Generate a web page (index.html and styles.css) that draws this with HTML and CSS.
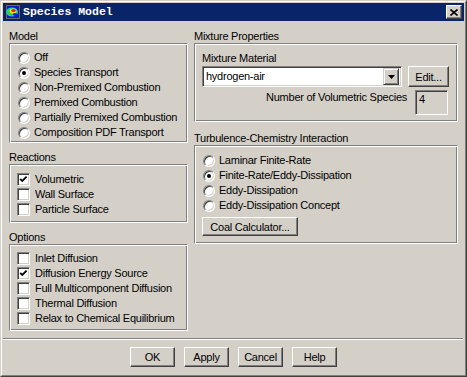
FILE: index.html
```html
<!DOCTYPE html>
<html>
<head>
<meta charset="utf-8">
<link rel="stylesheet" href="styles.css">
</head>
<body>
<div class="window">
  <div class="frame">
    <div class="titlebar">
      <svg class="app-icon" width="16" height="16" viewBox="0 0 16 16">
        <rect x="0" y="0" width="16" height="16" fill="#202020"/>
        <rect x="1" y="1" width="14" height="14" fill="#6a6a6a"/>
        <rect x="2" y="2" width="12" height="12" fill="#0a1cc8"/>
        <ellipse cx="7" cy="8" rx="6" ry="4.5" fill="#10c8e0"/>
        <ellipse cx="7" cy="8" rx="5" ry="3.5" fill="#30d040"/>
        <ellipse cx="8" cy="7" rx="3.5" ry="2.5" fill="#f0e020"/>
        <ellipse cx="8.5" cy="6.5" rx="2.2" ry="1.6" fill="#e82010"/>
        <ellipse cx="10" cy="10.5" rx="2" ry="1.2" fill="#0a1cc8"/>
      </svg>
      <span class="title">Species Model</span>
      <div class="close">
        <svg width="8" height="7" viewBox="0 0 8 7"><path d="M0.5 0.5 L7.5 6.5 M7.5 0.5 L0.5 6.5" stroke="#000" stroke-width="1.6" fill="none"/></svg>
      </div>
    </div>
    <div class="content">
      <div class="columns">
        <div class="col col-left">
          <div class="group">
            <div class="glabel">Model</div>
            <div class="gbox box-model">
              <div class="opt"><span class="radio"></span>Off</div>
              <div class="opt"><span class="radio on"></span>Species Transport</div>
              <div class="opt"><span class="radio"></span>Non-Premixed Combustion</div>
              <div class="opt"><span class="radio"></span>Premixed Combustion</div>
              <div class="opt"><span class="radio"></span>Partially Premixed Combustion</div>
              <div class="opt"><span class="radio"></span>Composition PDF Transport</div>
            </div>
          </div>
          <div class="group group-next">
            <div class="glabel">Reactions</div>
            <div class="gbox box-reactions">
              <div class="opt chk"><span class="check on"><svg width="9" height="9" viewBox="0 0 9 9"><path d="M1.2 3.8 L3.3 6 L7.6 1.6" stroke="#000" stroke-width="1.8" fill="none"/></svg></span>Volumetric</div>
              <div class="opt chk"><span class="check"></span>Wall Surface</div>
              <div class="opt chk"><span class="check"></span>Particle Surface</div>
            </div>
          </div>
          <div class="group group-next">
            <div class="glabel">Options</div>
            <div class="gbox box-options">
              <div class="opt chk"><span class="check"></span>Inlet Diffusion</div>
              <div class="opt chk"><span class="check on"><svg width="9" height="9" viewBox="0 0 9 9"><path d="M1.2 3.8 L3.3 6 L7.6 1.6" stroke="#000" stroke-width="1.8" fill="none"/></svg></span>Diffusion Energy Source</div>
              <div class="opt chk"><span class="check"></span>Full Multicomponent Diffusion</div>
              <div class="opt chk"><span class="check"></span>Thermal Diffusion</div>
              <div class="opt chk"><span class="check"></span>Relax to Chemical Equilibrium</div>
            </div>
          </div>
        </div>
        <div class="col col-right">
          <div class="group">
            <div class="glabel">Mixture Properties</div>
            <div class="gbox box-mixture">
              <div class="sublabel">Mixture Material</div>
              <div class="combo-row">
                <div class="combo">
                  <span class="combo-text">hydrogen-air</span>
                  <span class="combo-btn"><svg width="7" height="4" viewBox="0 0 7 4"><path d="M0 0 H7 L3.5 4 Z" fill="#000"/></svg></span>
                </div>
                <div class="btn btn-edit">Edit...</div>
              </div>
              <div class="num-row">
                <span class="num-label">Number of Volumetric Species</span>
                <div class="field">4</div>
              </div>
            </div>
          </div>
          <div class="group group-turb">
            <div class="glabel">Turbulence-Chemistry Interaction</div>
            <div class="gbox box-turb">
              <div class="opt"><span class="radio"></span>Laminar Finite-Rate</div>
              <div class="opt"><span class="radio on"></span>Finite-Rate/Eddy-Dissipation</div>
              <div class="opt"><span class="radio"></span>Eddy-Dissipation</div>
              <div class="opt"><span class="radio"></span>Eddy-Dissipation Concept</div>
              <div class="btn btn-coal">Coal Calculator...</div>
            </div>
          </div>
        </div>
      </div>
      <div class="separator"></div>
      <div class="actions">
        <div class="btn btn-action">OK</div>
        <div class="btn btn-action">Apply</div>
        <div class="btn btn-action">Cancel</div>
        <div class="btn btn-action">Help</div>
      </div>
    </div>
  </div>
</div>
</body>
</html>
```
FILE: styles.css
```css
html, body {
  margin: 0;
  padding: 0;
  background: #d4d0c8;
}
body {
  font-family: "Liberation Sans", Arial, sans-serif;
  font-size: 11px;
  letter-spacing: -0.25px;
  color: #000;
}
.window {
  width: 467px;
  height: 377px;
  box-sizing: border-box;
  border: 1px solid;
  border-color: #d4d0c8 #404040 #404040 #d4d0c8;
  background: #d4d0c8;
}
.frame {
  height: 100%;
  box-sizing: border-box;
  border: 1px solid;
  border-color: #fff #808080 #808080 #fff;
  padding: 1px;
  display: flex;
  flex-direction: column;
}
.titlebar {
  height: 18px;
  flex: none;
  background: #0a246a;
  display: flex;
  align-items: center;
  padding: 0 2px;
}
.app-icon {
  display: block;
  margin-right: 2px;
  flex: none;
}
.title {
  font-family: "Liberation Mono", "DejaVu Sans Mono", monospace;
  font-weight: bold;
  font-size: 11.5px;
  letter-spacing: 0;
  color: #fff;
  line-height: 18px;
}
.close {
  margin-left: auto;
  width: 16px;
  height: 14px;
  box-sizing: border-box;
  background: #d4d0c8;
  border: 1px solid;
  border-color: #fff #404040 #404040 #fff;
  box-shadow: inset -1px -1px #808080;
  display: flex;
  align-items: center;
  justify-content: center;
}
.close svg { display: block; }
.content {
  flex: 1;
  padding: 8px 6px 0;
  display: flex;
  flex-direction: column;
}
.columns {
  display: flex;
  gap: 6px;
  align-items: flex-start;
}
.col-left { width: 179px; }
.col-right { width: 264px; }
.glabel {
  height: 14px;
  line-height: 14px;
  padding-left: 0;
}
.group-next { margin-top: 7px; }
.group-turb { margin-top: 9px; }
.gbox {
  box-sizing: border-box;
  border: 1px solid;
  border-color: #808080 #fff #fff #808080;
  box-shadow: inset 1px 1px #fff, inset -1px -1px #808080;
  padding-left: 6px;
  padding-right: 6px;
}
.box-model { height: 100px; padding-top: 6px; padding-left: 8px; }
.box-reactions { height: 59px; padding-top: 7px; padding-left: 7px; }
.box-options { height: 87px; padding-top: 6px; padding-left: 7px; }
.box-mixture { height: 79px; padding-top: 7px; padding-left: 7px; padding-right: 8px; }
.box-turb { height: 99px; padding-top: 7px; padding-left: 8px; }
.opt {
  height: 15px;
  line-height: 15px;
  display: flex;
  align-items: center;
  gap: 4px;
  white-space: nowrap;
}
.opt.chk { gap: 5px; }
.radio {
  width: 12px;
  height: 12px;
  flex: none;
  box-sizing: border-box;
  border-radius: 50%;
  background: #fff;
  border: 1px solid;
  border-color: #808080 #fff #fff #808080;
  box-shadow: inset 1px 1px #404040, inset -1px -1px #d4d0c8;
  display: flex;
  align-items: center;
  justify-content: center;
}
.radio.on::after {
  content: "";
  width: 4px;
  height: 4px;
  border-radius: 50%;
  background: #000;
}
.check {
  width: 13px;
  height: 13px;
  flex: none;
  box-sizing: border-box;
  background: #fff;
  border: 1px solid;
  border-color: #808080 #fff #fff #808080;
  box-shadow: inset 1px 1px #404040, inset -1px -1px #d4d0c8;
  display: flex;
  align-items: center;
  justify-content: center;
}
.check svg { display: block; }
.sublabel {
  height: 14px;
  line-height: 14px;
}
.combo-row {
  margin-top: 1px;
  display: flex;
  gap: 6px;
}
.combo {
  width: 200px;
  height: 21px;
  box-sizing: border-box;
  background: #fff;
  border: 1px solid;
  border-color: #808080 #fff #fff #808080;
  box-shadow: inset 1px 1px #404040, inset -1px -1px #d4d0c8;
  padding: 2px;
  display: flex;
  align-items: center;
}
.combo-text {
  flex: 1;
  padding-left: 1px;
  line-height: 15px;
}
.combo-btn {
  width: 16px;
  height: 17px;
  box-sizing: border-box;
  background: #d4d0c8;
  border: 1px solid;
  border-color: #d4d0c8 #404040 #404040 #d4d0c8;
  box-shadow: inset 1px 1px #fff, inset -1px -1px #808080;
  display: flex;
  align-items: center;
  justify-content: center;
}
.combo-btn svg { display: block; }
.btn {
  box-sizing: border-box;
  background: #d4d0c8;
  border: 1px solid;
  border-color: #fff #404040 #404040 #fff;
  box-shadow: inset -1px -1px #808080;
  display: flex;
  align-items: center;
  justify-content: center;
  white-space: nowrap;
}
.btn-edit { width: 41px; height: 21px; }
.num-row {
  margin-top: 3px;
  display: flex;
  justify-content: flex-end;
  align-items: flex-start;
  gap: 8px;
}
.num-label {
  line-height: 14px;
}
.field {
  width: 33px;
  height: 25px;
  box-sizing: border-box;
  background: #d4d0c8;
  border: 1px solid;
  border-color: #808080 #fff #fff #808080;
  box-shadow: inset 1px 1px #404040, inset -1px -1px #d4d0c8;
  padding: 1px 2px 0 3px;
  line-height: 14px;
  margin-right: 1px;
}
.btn-coal {
  width: 96px;
  height: 19px;
  margin-top: 4px;
  margin-left: -1px;
}
.separator {
  margin: 7px -5px 0 -6px;
  height: 0;
  border-top: 1px solid #808080;
  border-bottom: 1px solid #fff;
}
.actions {
  margin-top: 7px;
  display: flex;
  justify-content: center;
  gap: 9px;
}
.btn-action { width: 45px; height: 20px; }
```
